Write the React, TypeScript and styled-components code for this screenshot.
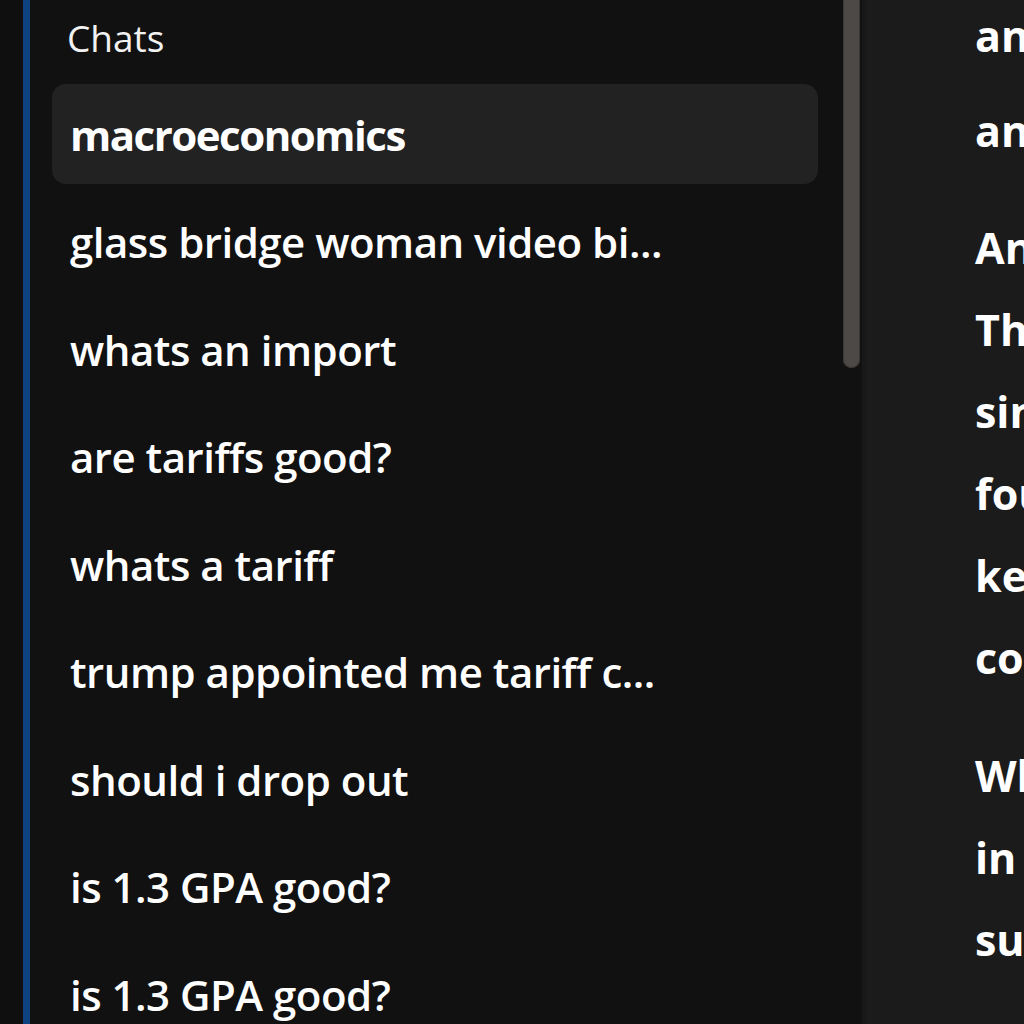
import styled, {createGlobalStyle} from 'styled-components';

const chats = [
  'macroeconomics',
  'glass bridge woman video bi...',
  'whats an import',
  'are tariffs good?',
  'whats a tariff',
  'trump appointed me tariff c...',
  'should i drop out',
  'is 1.3 GPA good?',
  'is 1.3 GPA good?',
];

const paragraphs = [
  {gap: 0, lines: ['and that is how it works in practice.']},
  {gap: 13, lines: ['and that is the short answer.']},
  {
    gap: 35,
    lines: [
      'Another way to look at it is through trade.',
      'The government taxes imported goods,',
      'since domestic producers then compete',
      'found in other countries that can',
      'keep prices lower for consumers who',
      'could otherwise buy them cheaper.',
    ],
  },
  {
    gap: 36,
    lines: [
      'What matters most is who pays the cost',
      'in the end, and whether it helps',
      'support local jobs over time.',
    ],
  },
];

function App() {
  return (
    <>
      <GlobalStyle />
      <Shell>
        <Rail />
        <Sidebar>
          <SectionTitle>Chats</SectionTitle>
          <ChatList>
            {chats.map((title, i) => (
              <ChatItem key={i} $active={i === 0}>
                {title}
              </ChatItem>
            ))}
          </ChatList>
          <ScrollThumb />
        </Sidebar>
        <Main>
          {paragraphs.map((p, i) => (
            <Paragraph key={i} $gap={p.gap}>
              {p.lines.map((line, j) => (
                <Line key={j}>{line}</Line>
              ))}
            </Paragraph>
          ))}
        </Main>
      </Shell>
    </>
  );
}

const GlobalStyle = createGlobalStyle`
  html, body {
    margin: 0;
    padding: 0;
    background: #111111;
  }
  body {
    font-family: "Open Sans", "Noto Sans", sans-serif;
    color: #ffffff;
  }
`;

const Shell = styled.div`
  display: flex;
  width: 1024px;
  height: 1024px;
  overflow: hidden;
`;

const Rail = styled.div`
  flex: 0 0 23px;
  background: #0f0f0f;
  border-right: 7px solid #0e4280;
`;

const Sidebar = styled.nav`
  position: relative;
  flex: 0 0 836px;
  box-sizing: border-box;
  padding: 0 44px 0 22px;
  background: #111111;
  border-right: 4px solid #181818;
  overflow: hidden;
`;

const SectionTitle = styled.h2`
  margin: 0;
  height: 84px;
  padding: 12px 0 0 15px;
  box-sizing: border-box;
  font-size: 37px;
  font-weight: 400;
  line-height: 52px;
  color: #f2f2f2;
`;

const ChatList = styled.ul`
  list-style: none;
  margin: 0;
  padding: 0;
  display: flex;
  flex-direction: column;
  gap: 7.5px;
`;

const ChatItem = styled.li<{$active?: boolean}>`
  height: 100px;
  display: flex;
  align-items: center;
  padding-left: 18px;
  border-radius: 14px;
  background: ${({$active}) => ($active ? '#222222' : 'transparent')};
  font-size: 42px;
  font-weight: ${({$active}) => ($active ? 700 : 600)};
  letter-spacing: ${({$active}) => ($active ? '-1.5px' : '-0.5px')};
  white-space: nowrap;
  color: #ffffff;
`;

const ScrollThumb = styled.div`
  position: absolute;
  top: -10px;
  right: 2px;
  width: 17px;
  height: 378px;
  border-radius: 9px;
  background: #4d4947;
  box-shadow: inset 0 0 0 1px #3a3735;
`;

const Main = styled.main`
  flex: 1;
  min-width: 0;
  padding: 0 0 0 109px;
  background: #1b1b1b;
  overflow: hidden;
`;

const Paragraph = styled.p<{$gap: number}>`
  margin: ${({$gap}) => $gap}px 0 0 0;
`;

const Line = styled.span`
  display: block;
  height: 82px;
  font-size: 43px;
  font-weight: 700;
  line-height: 72px;
  white-space: nowrap;
  color: #ffffff;
`;

export default App;
